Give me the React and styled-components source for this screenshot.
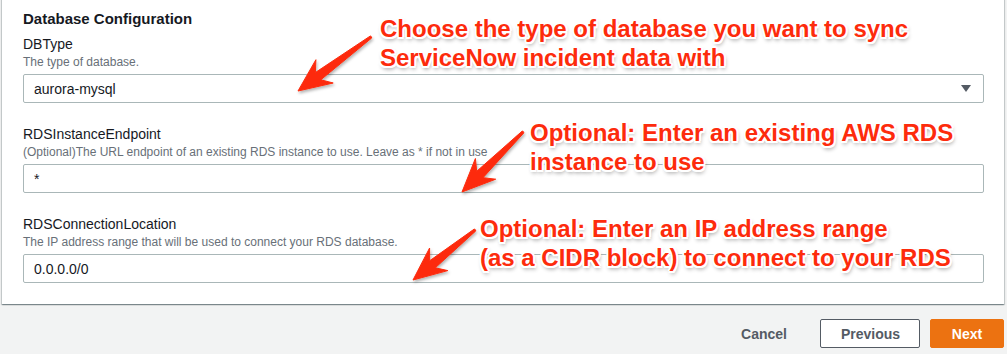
import React from 'react';
import styled, { createGlobalStyle } from 'styled-components';

const GlobalStyle = createGlobalStyle`
  html, body {
    margin: 0;
    padding: 0;
    background: #f2f3f3;
    overflow: hidden;
  }
  body {
    font-family: "Liberation Sans", Arial, sans-serif;
    color: #16191f;
  }
`;

const Page = styled.div`
  position: relative;
  width: 1007px;
  height: 354px;
  box-sizing: border-box;
  padding: 0 3px 0 2px;
  overflow: hidden;
`;

const Panel = styled.section`
  margin-top: -10px;
  padding: 18px 20px 21px 21px;
  background: #fff;
  border-top: 1px solid #eaeded;
  box-shadow: 0 1px 1px 0 rgba(0, 28, 36, 0.3), 1px 1px 1px 0 rgba(0, 28, 36, 0.15),
    -1px 1px 1px 0 rgba(0, 28, 36, 0.15);
`;

const Heading = styled.h2`
  margin: 0 0 5px;
  font-size: 15px;
  line-height: 20px;
  font-weight: 700;
  color: #16191f;
`;

const Fields = styled.div`
  display: flex;
  flex-direction: column;
  gap: 21px;
`;

const Field = styled.div`
  display: flex;
  flex-direction: column;
`;

const Label = styled.label`
  font-size: 14px;
  line-height: 20px;
  color: #16191f;
`;

const Hint = styled.div`
  font-size: 12px;
  line-height: 16px;
  color: #687078;
  margin-bottom: 4px;
`;

const Input = styled.div`
  position: relative;
  box-sizing: border-box;
  height: 29px;
  border: 1px solid #aab7b8;
  border-radius: 2px;
  padding: 0 10px;
  display: flex;
  align-items: center;
  font-size: 14px;
  color: #16191f;
  background: #fff;
`;

const Caret = styled.span`
  margin-left: auto;
  margin-right: 2px;
  width: 0;
  height: 0;
  border-left: 5px solid transparent;
  border-right: 5px solid transparent;
  border-top: 7px solid #545b64;
`;

const Footer = styled.div`
  display: flex;
  justify-content: flex-end;
  align-items: center;
  gap: 10px;
  margin-top: 15px;
`;

const Button = styled.button`
  box-sizing: border-box;
  height: 29px;
  padding: 0 ${(p) => p.$pad || 20}px;
  font-family: inherit;
  font-size: 14px;
  font-weight: 700;
  border-radius: 2px;
  border: 1px solid ${(p) => (p.$variant === 'primary' ? '#ec7211' : p.$variant === 'link' ? 'transparent' : '#545b64')};
  background: ${(p) => (p.$variant === 'primary' ? '#ec7211' : p.$variant === 'link' ? 'transparent' : '#fff')};
  color: ${(p) => (p.$variant === 'primary' ? '#fff' : '#545b64')};
  margin-right: ${(p) => p.$gap || 0}px;
`;

const Note = styled.div`
  position: absolute;
  left: ${(p) => p.$x}px;
  top: ${(p) => p.$y}px;
  font-family: "Liberation Sans", Arial, sans-serif;
  font-weight: 700;
  font-size: 24px;
  line-height: 29px;
  color: #fd2b0c;
  white-space: nowrap;
  text-shadow: -1.5px -1.5px 0 #fff, 1.5px -1.5px 0 #fff, -1.5px 1.5px 0 #fff,
    1.5px 1.5px 0 #fff, 0 -2px 0 #fff, 0 2px 0 #fff, -2px 0 0 #fff, 2px 0 0 #fff,
    1px 3px 4px rgba(0, 0, 0, 0.45);
`;

const Overlay = styled.svg`
  position: absolute;
  left: 0;
  top: 0;
  pointer-events: none;
`;

function arrowPoints(tail, tip) {
  const dx = tip[0] - tail[0];
  const dy = tip[1] - tail[1];
  const len = Math.hypot(dx, dy);
  const ux = dx / len;
  const uy = dy / len;
  const nx = -uy;
  const ny = ux;
  const P = (a, b) => `${(tail[0] + ux * a + nx * b).toFixed(1)},${(tail[1] + uy * a + ny * b).toFixed(1)}`;
  return [
    P(len, 0),
    P(len - 33, 14.5),
    P(len - 25, 4.5),
    P(0, 1.2),
    P(-0.5, 0),
    P(0, -1.2),
    P(len - 25, -4.5),
    P(len - 33, -14.5),
  ].join(' ');
}

const arrows = [
  { tail: [371, 37], tip: [298, 91] },
  { tail: [523, 132], tip: [462, 192] },
  { tail: [475, 230], tip: [413, 280] },
];

export default function App() {
  return (
    <>
      <GlobalStyle />
      <Page>
        <Panel>
          <Heading>Database Configuration</Heading>
          <Fields>
            <Field>
              <Label>DBType</Label>
              <Hint>The type of database.</Hint>
              <Input>
                aurora-mysql
                <Caret />
              </Input>
            </Field>
            <Field>
              <Label>RDSInstanceEndpoint</Label>
              <Hint>(Optional)The URL endpoint of an existing RDS instance to use. Leave as * if not in use</Hint>
              <Input>*</Input>
            </Field>
            <Field>
              <Label>RDSConnectionLocation</Label>
              <Hint>The IP address range that will be used to connect your RDS database.</Hint>
              <Input>0.0.0.0/0</Input>
            </Field>
          </Fields>
        </Panel>
        <Footer>
          <Button $variant="link" $gap={2}>Cancel</Button>
          <Button $pad={20} style={{ width: 100 }}>Previous</Button>
          <Button $variant="primary" style={{ width: 74 }}>Next</Button>
        </Footer>

        <Note $x={380} $y={14}>
          Choose the type of database you want to sync
          <br />
          ServiceNow incident data with
        </Note>
        <Note $x={530} $y={118}>
          Optional: Enter an existing AWS RDS
          <br />
          instance to use
        </Note>
        <Note $x={480} $y={214}>
          Optional: Enter an IP address range
          <br />
          (as a CIDR block) to connect to your RDS
        </Note>

        <Overlay width="1007" height="354" viewBox="0 0 1007 354">
          <defs>
            <filter id="arrowShadow" x="-20%" y="-20%" width="140%" height="140%">
              <feDropShadow dx="1" dy="2" stdDeviation="1.5" floodColor="#000" floodOpacity="0.3" />
            </filter>
          </defs>
          {arrows.map((a, i) => (
            <polygon
              key={i}
              points={arrowPoints(a.tail, a.tip)}
              fill="#fd2b0c"
              stroke="#fd2b0c"
              strokeWidth="1"
              strokeLinejoin="round"
              filter="url(#arrowShadow)"
            />
          ))}
        </Overlay>
      </Page>
    </>
  );
}
